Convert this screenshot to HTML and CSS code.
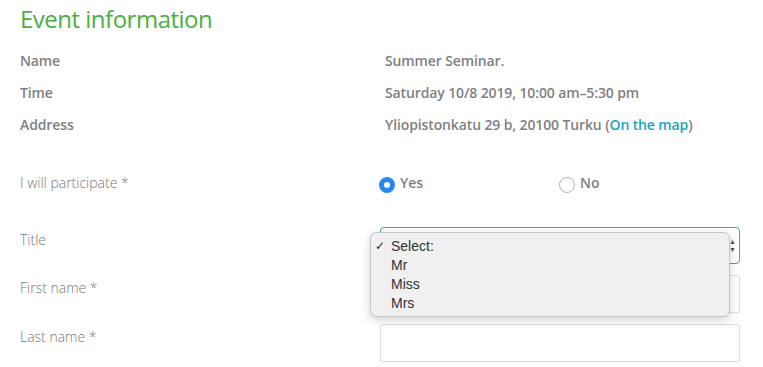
FILE: index.html
```html
<!DOCTYPE html>
<html lang="en">
<head>
    <meta charset="UTF-8">
    <meta name="viewport" content="width=device-width, initial-scale=1.0">
    <title>Event information</title>
    <link rel="stylesheet" href="styles.css">
</head>
<body>
    <div class="event">
        <h1 class="otsikko">Event information</h1>
        <div class="tiedot">
            <div class="rivi"><span class="nimi">Name</span><span class="arvo">Summer Seminar.</span></div>
            <div class="rivi"><span class="nimi">Time</span><span class="arvo">Saturday 10/8 2019, 10:00 am&ndash;5:30 pm</span></div>
            <div class="rivi"><span class="nimi">Address</span><span class="arvo">Yliopistonkatu 29 b, 20100 Turku (<a href="#">On the map</a>)</span></div>
        </div>

        <form class="lomake">
            <div class="kentta osallistuu">
                <label class="selite">I will participate *</label>
                <div class="valinnat">
                    <label class="radio"><input type="radio" name="osallistun" checked> Yes</label>
                    <label class="radio"><input type="radio" name="osallistun"> No</label>
                </div>
            </div>
            <div class="kentta">
                <label class="selite">Title</label>
                <div class="valikko">
                    <div class="laatikko"><span class="nuolet">&#9650;<br>&#9660;</span></div>
                    <ul class="lista">
                        <li class="valittu">Select:</li>
                        <li>Mr</li>
                        <li>Miss</li>
                        <li>Mrs</li>
                    </ul>
                </div>
            </div>
            <div class="kentta">
                <label class="selite">First name *</label>
                <input class="teksti" type="text">
            </div>
            <div class="kentta">
                <label class="selite">Last name *</label>
                <input class="teksti" type="text">
            </div>
        </form>
    </div>
</body>
</html>
```

FILE: styles.css
```css
body {
    margin: 0;
    font-family: "Open Sans", sans-serif;
    color: #7f7f7f;
    background: #fff;
}
.event {
    padding: 0 20px;
}
.otsikko {
    font-size: 24px;
    font-weight: normal;
    letter-spacing: -0.5px;
    color: #4caf3f;
    margin: 0;
    line-height: 36px;
    padding-top: 1px;
    margin-bottom: 8px;
}
.tiedot {
    margin-bottom: 29px;
}
.rivi {
    display: grid;
    grid-template-columns: 365px 1fr;
    font-size: 14px;
    font-weight: 600;
    letter-spacing: -0.12px;
    line-height: 32px;
}
.arvo a {
    color: #17a5bd;
    text-decoration: none;
}
.kentta {
    display: grid;
    grid-template-columns: 360px 360px;
    margin-bottom: 11px;
}
.osallistuu {
    margin-bottom: 20px;
}
.selite {
    font-size: 14px;
    font-weight: 300;
    line-height: 20px;
    padding-top: 3px;
    color: #787878;
}
.valinnat {
    display: grid;
    grid-template-columns: 1fr 1fr;
    height: 37px;
}
.radio {
    display: flex;
    align-items: flex-start;
    gap: 5px;
    font-size: 14px;
    font-weight: 600;
    line-height: 20px;
    padding-top: 3px;
}
.radio input {
    appearance: none;
    margin: 4px 0 0 -1px;
    width: 16px;
    height: 16px;
    border-radius: 50%;
    border: 1px solid #b5b5b5;
    background: #fff;
}
.radio input:checked {
    border: 5px solid #2a86f3;
    background: #fff;
}
.valikko {
    position: relative;
    height: 37px;
}
.laatikko {
    height: 37px;
    box-sizing: border-box;
    border: 1px solid #2aadc2;
    border-radius: 4px;
    background: #fff;
    position: relative;
}
.nuolet {
    position: absolute;
    right: 3px;
    top: 10px;
    font-size: 7px;
    line-height: 8px;
    color: #555;
}
.lista {
    position: absolute;
    left: -10px;
    top: 5px;
    width: 360px;
    box-sizing: border-box;
    margin: 0;
    padding: 4px 0 3px;
    list-style: none;
    background: #f0f0f0;
    border: 1px solid #c6c6c6;
    border-radius: 6px;
    box-shadow: 0 3px 10px rgba(0, 0, 0, 0.18);
    font-family: "Liberation Sans", Arial, sans-serif;
    font-size: 14px;
    line-height: 19px;
    color: #333;
}
.lista li {
    padding-left: 20px;
    position: relative;
}
.valittu::before {
    content: "\2713";
    position: absolute;
    left: 4px;
    font-size: 12px;
}
.teksti {
    width: 360px;
    height: 38px;
    box-sizing: border-box;
    border: 1px solid #ddd;
    border-radius: 2px;
    margin: 0;
}
```
